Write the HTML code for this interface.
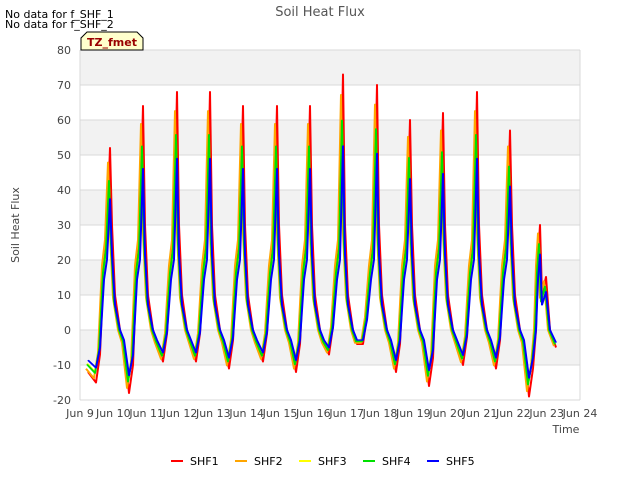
<!DOCTYPE html>
<html><head><style>
body{margin:0;width:640px;height:480px;background:#fff;font-family:"DejaVu Sans","Liberation Sans",sans-serif;overflow:hidden}
</style></head><body>
<svg width="640" height="480" xmlns="http://www.w3.org/2000/svg" font-family="DejaVu Sans, Liberation Sans, sans-serif">
<rect width="640" height="480" fill="#fff"/>
<g fill="#f2f2f2">
<rect x="80" y="50" width="500" height="35"/>
<rect x="80" y="120" width="500" height="35"/>
<rect x="80" y="190" width="500" height="35"/>
<rect x="80" y="260" width="500" height="35"/>
<rect x="80" y="330" width="500" height="35"/>
</g>
<g stroke="#d9d9d9" stroke-width="1">
<line x1="80" y1="50" x2="580" y2="50"/><line x1="80" y1="85" x2="580" y2="85"/>
<line x1="80" y1="120" x2="580" y2="120"/><line x1="80" y1="155" x2="580" y2="155"/>
<line x1="80" y1="190" x2="580" y2="190"/><line x1="80" y1="225" x2="580" y2="225"/>
<line x1="80" y1="260" x2="580" y2="260"/><line x1="80" y1="295" x2="580" y2="295"/>
<line x1="80" y1="330" x2="580" y2="330"/><line x1="80" y1="365" x2="580" y2="365"/>
<line x1="80" y1="400" x2="580" y2="400"/>
<line x1="80" y1="50" x2="80" y2="400"/><line x1="580" y1="50" x2="580" y2="400"/>
</g>
<g font-size="11" fill="#444" text-anchor="end">
<text x="71" y="54">80</text><text x="71" y="89">70</text><text x="71" y="124">60</text>
<text x="71" y="159">50</text><text x="71" y="194">40</text><text x="71" y="229">30</text>
<text x="71" y="264">20</text><text x="71" y="299">10</text><text x="71" y="334">0</text>
<text x="71" y="369">-10</text><text x="71" y="404">-20</text>
</g>
<g font-size="11" fill="#444" text-anchor="middle">
<text x="80" y="417">Jun 9</text><text x="113.3" y="417">Jun 10</text><text x="146.7" y="417">Jun 11</text>
<text x="180" y="417">Jun 12</text><text x="213.3" y="417">Jun 13</text><text x="246.7" y="417">Jun 14</text>
<text x="280" y="417">Jun 15</text><text x="313.3" y="417">Jun 16</text><text x="346.7" y="417">Jun 17</text>
<text x="380" y="417">Jun 18</text><text x="413.3" y="417">Jun 19</text><text x="446.7" y="417">Jun 20</text>
<text x="480" y="417">Jun 21</text><text x="513.3" y="417">Jun 22</text><text x="546.7" y="417">Jun 23</text>
<text x="580" y="417">Jun 24</text>
</g>
<text x="566" y="433" font-size="11" fill="#444" text-anchor="middle">Time</text>
<text x="19" y="225" font-size="11" fill="#444" text-anchor="middle" transform="rotate(-90 19 225)">Soil Heat Flux</text>
<text x="320" y="16" font-size="13" fill="#555" text-anchor="middle">Soil Heat Flux</text>
<text x="5" y="18" font-size="11" fill="#000">No data for f_SHF_1</text>
<text x="5" y="28" font-size="11" fill="#000">No data for f_SHF_2</text>
<defs>
<path id="d" fill="none" stroke-width="2" stroke-linejoin="round" d="M88,372 L96,382.5 100,354.5 104,260 107,232 110,148 112,225 115,295 120,330 124,344 L129,393 133,365 137,260 140,232 143,106 145,225 148,295 153,330 157,344 L163,361.5 167,333.5 171,260 174,232 177,92 179,225 182,295 187,330 191,344 L196,361.5 200,333.5 204,260 207,232 210,92 212,225 215,295 220,330 224,344 L229,368.5 233,340.5 237,260 240,232 243,106 245,225 248,295 253,330 257,344 L263,361.5 267,333.5 271,260 274,232 277,106 279,225 282,295 287,330 291,344 L296,372 300,344 304,260 307,232 310,106 312,225 315,295 320,330 324,344 L329,354.5 333,326.5 337,260 340,232 343,74.5 345,225 348,295 353,330 357,344 L363,344 367,316 371,260 374,232 377,85 379,225 382,295 387,330 391,344 L396,372 400,344 404,260 407,232 410,120 412,225 415,295 420,330 424,344 L429,386 433,358 437,260 440,232 443,113 445,225 448,295 453,330 457,344 L463,365 467,337 471,260 474,232 477,92 479,225 482,295 487,330 491,344 L496,368.5 500,340.5 504,260 507,232 510,130.5 512,225 515,295 520,330 524,344 L529,396.5 533,368.5 536,330 538,260 540,225 542,295 546,277 550,330 556,347.5"/>
</defs>
<use href="#d" stroke="#ff0000"/>
<use href="#d" stroke="#ffa500" transform="translate(-2,330) scale(1,0.92) translate(0,-330)"/>
<use href="#d" stroke="#ffff00" transform="translate(-1,330) scale(1,0.8) translate(0,-330)"/>
<use href="#d" stroke="#00e000" transform="translate(-1,330) scale(1,0.82) translate(0,-330)"/>
<use href="#d" stroke="#0000ff" transform="translate(0,330) scale(1,0.72) translate(0,-330)"/>
<path d="M81,50 L81,38 L87,32 L137,32 L143,38 L143,50 Z" fill="#ffffcc" stroke="#000" stroke-width="1"/>
<text x="112" y="46" font-size="11" font-weight="bold" fill="#990000" text-anchor="middle">TZ_fmet</text>
<g font-size="11" fill="#000">
<line x1="171" y1="461" x2="183" y2="461" stroke="#ff0000" stroke-width="2"/><text x="190" y="465">SHF1</text>
<line x1="235" y1="461" x2="247" y2="461" stroke="#ffa500" stroke-width="2"/><text x="254" y="465">SHF2</text>
<line x1="299" y1="461" x2="311" y2="461" stroke="#ffff00" stroke-width="2"/><text x="318" y="465">SHF3</text>
<line x1="363" y1="461" x2="375" y2="461" stroke="#00e000" stroke-width="2"/><text x="382" y="465">SHF4</text>
<line x1="427" y1="461" x2="439" y2="461" stroke="#0000ff" stroke-width="2"/><text x="446" y="465">SHF5</text>
</g>
</svg>
</body></html>
